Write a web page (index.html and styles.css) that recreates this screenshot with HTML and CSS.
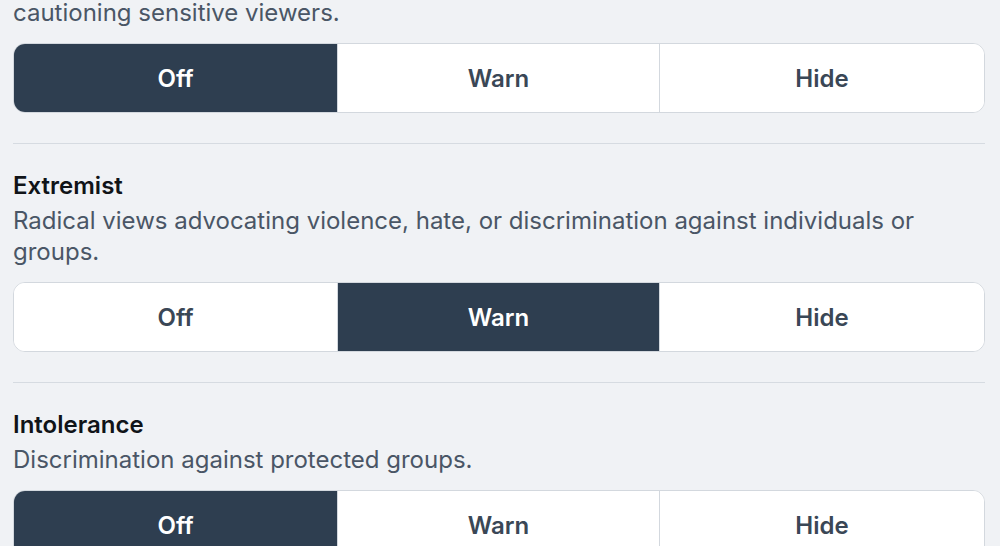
FILE: index.html
```html
<!DOCTYPE html>
<html lang="en">
<head>
<meta charset="utf-8">
<title>Content filters</title>
<link rel="stylesheet" href="styles.css">
</head>
<body>
<div class="page">
  <section class="filter first">
    <p class="desc">cautioning sensitive viewers.</p>
    <div class="seg">
      <button class="opt active">Off</button>
      <button class="opt">Warn</button>
      <button class="opt">Hide</button>
    </div>
  </section>
  <section class="filter">
    <h3 class="title">Extremist</h3>
    <p class="desc">Radical views advocating violence, hate, or discrimination against individuals or groups.</p>
    <div class="seg">
      <button class="opt">Off</button>
      <button class="opt active">Warn</button>
      <button class="opt">Hide</button>
    </div>
  </section>
  <section class="filter">
    <h3 class="title">Intolerance</h3>
    <p class="desc">Discrimination against protected groups.</p>
    <div class="seg">
      <button class="opt active">Off</button>
      <button class="opt">Warn</button>
      <button class="opt">Hide</button>
    </div>
  </section>
</div>
</body>
</html>
```
FILE: styles.css
```css
html, body {
  margin: 0;
  padding: 0;
  background: #f0f2f5;
  font-family: Inter, "Noto Sans", sans-serif;
  overflow: hidden;
}
.page {
  padding: 0 15px 0 13px;
  margin-top: -3px;
}
.filter {
  padding: 27px 0 30px;
  border-bottom: 1px solid #d6dbe1;
}
.filter.first {
  padding-top: 0;
}
.title {
  margin: 0 0 4px;
  font-size: 24px;
  line-height: 30px;
  font-weight: 600;
  color: #101418;
}
.desc {
  margin: 0 0 15px;
  font-size: 24px;
  line-height: 31px;
  font-weight: 400;
  color: #4a5666;
}
.seg {
  display: grid;
  grid-template-columns: 323fr 322fr 325fr;
  box-sizing: border-box;
  height: 70px;
  border: 1px solid #d3d8de;
  border-radius: 12px;
  overflow: hidden;
  background: #fff;
}
.opt {
  border: 0;
  border-left: 1px solid #d3d8de;
  background: #fff;
  font-family: Inter, "Noto Sans", sans-serif;
  font-size: 24px;
  font-weight: 600;
  color: #3a4756;
  padding: 0;
}
.opt:first-child {
  border-left: 0;
}
.opt.active {
  background: #2e3e50;
  color: #ffffff;
}
```
